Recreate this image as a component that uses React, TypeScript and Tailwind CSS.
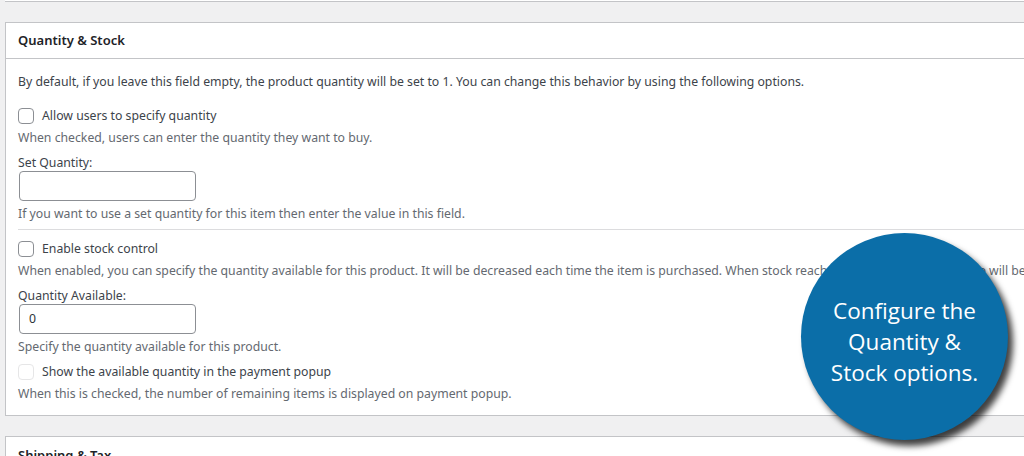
import React from 'react';

function Checkbox({ disabled }: { disabled?: boolean }) {
  return (
    <span
      className={`inline-block w-4 h-4 rounded-[4px] border bg-white shrink-0 ${
        disabled ? 'border-[#e6e6e7]' : 'border-[#8c8f94]'
      }`}
    />
  );
}

function Desc({ children }: { children: React.ReactNode }) {
  return <p className="text-[#646970] whitespace-nowrap leading-[22px]">{children}</p>;
}

export default function App() {
  return (
    <div
      className="relative w-[1024px] h-[456px] overflow-hidden bg-[#f0f0f1] text-[12.25px] text-[#3c434a]"
      style={{ fontFamily: '"Noto Sans", "Liberation Sans", sans-serif' }}
    >
      {/* previous panel */}
      <div className="h-[2px] ml-[5px] bg-white border-b border-[#c3c4c7]" />

      {/* Quantity & Stock panel */}
      <div className="mt-[20px] ml-[5px] bg-white border border-r-0 border-[#c3c4c7]">
        <div className="h-[36px] pl-[12px] flex items-center border-b border-[#c3c4c7]">
          <h2 className="text-[13px] font-semibold text-[#1d2327]">Quantity &amp; Stock</h2>
        </div>
        <div className="pl-[12px] pt-[12px] pb-[10px]">
          <p className="text-[#3c434a] whitespace-nowrap leading-[22px]">
            By default, if you leave this field empty, the product quantity will be set to 1. You can change this behavior by using the following options.
          </p>
          <div className="mt-[12px] flex items-center gap-[8px] h-[22px]">
            <Checkbox />
            <span>Allow users to specify quantity</span>
          </div>
          <Desc>When checked, users can enter the quantity they want to buy.</Desc>
          <div className="mt-[6px] leading-[16px]">Set Quantity:</div>
          <div className="ml-[1px] w-[177px] h-[30px] rounded-[4px] border border-[#8c8f94] bg-white" />
          <div className="mt-[2px]">
            <Desc>If you want to use a set quantity for this item then enter the value in this field.</Desc>
          </div>
          <div className="mt-[4px] border-t border-[#dcdcde]" />
          <div className="mt-[8px] flex items-center gap-[8px] h-[22px]">
            <Checkbox />
            <span>Enable stock control</span>
          </div>
          <Desc>
            When enabled, you can specify the quantity available for this product. It will be decreased each time the item is purchased. When stock reaches zero, a sold out message will be displayed.
          </Desc>
          <div className="mt-[5px] leading-[17px]">Quantity Available:</div>
          <div className="ml-[1px] w-[177px] h-[30px] rounded-[4px] border border-[#8c8f94] bg-white flex items-center pl-[9px] text-[#2c3338]">
            0
          </div>
          <div className="mt-[2px]">
            <Desc>Specify the quantity available for this product.</Desc>
          </div>
          <div className="mt-[3px] flex items-center gap-[8px] h-[22px]">
            <Checkbox disabled />
            <span>Show the available quantity in the payment popup</span>
          </div>
          <Desc>When this is checked, the number of remaining items is displayed on payment popup.</Desc>
        </div>
      </div>

      {/* Shipping & Tax panel */}
      <div className="mt-[20px] ml-[5px] bg-white border border-r-0 border-[#c3c4c7] h-[60px]">
        <div className="pl-[12px] pt-[9px]">
          <h2 className="text-[13px] font-semibold text-[#1d2327]">Shipping &amp; Tax</h2>
        </div>
      </div>

      {/* callout bubble */}
      <div
        className="absolute left-[801px] top-[233px] w-[207px] h-[207px] rounded-full bg-[#0b6ea8] flex items-center justify-center text-center text-white text-[22.5px] leading-[31px] shadow-[5px_6px_6px_rgba(0,0,0,0.75)]"
        style={{ fontFamily: '"Open Sans", "Noto Sans", sans-serif' }}
      >
        <div className="mt-[9px]">
          Configure the
          <br />
          Quantity &amp;
          <br />
          Stock options.
        </div>
      </div>
    </div>
  );
}
